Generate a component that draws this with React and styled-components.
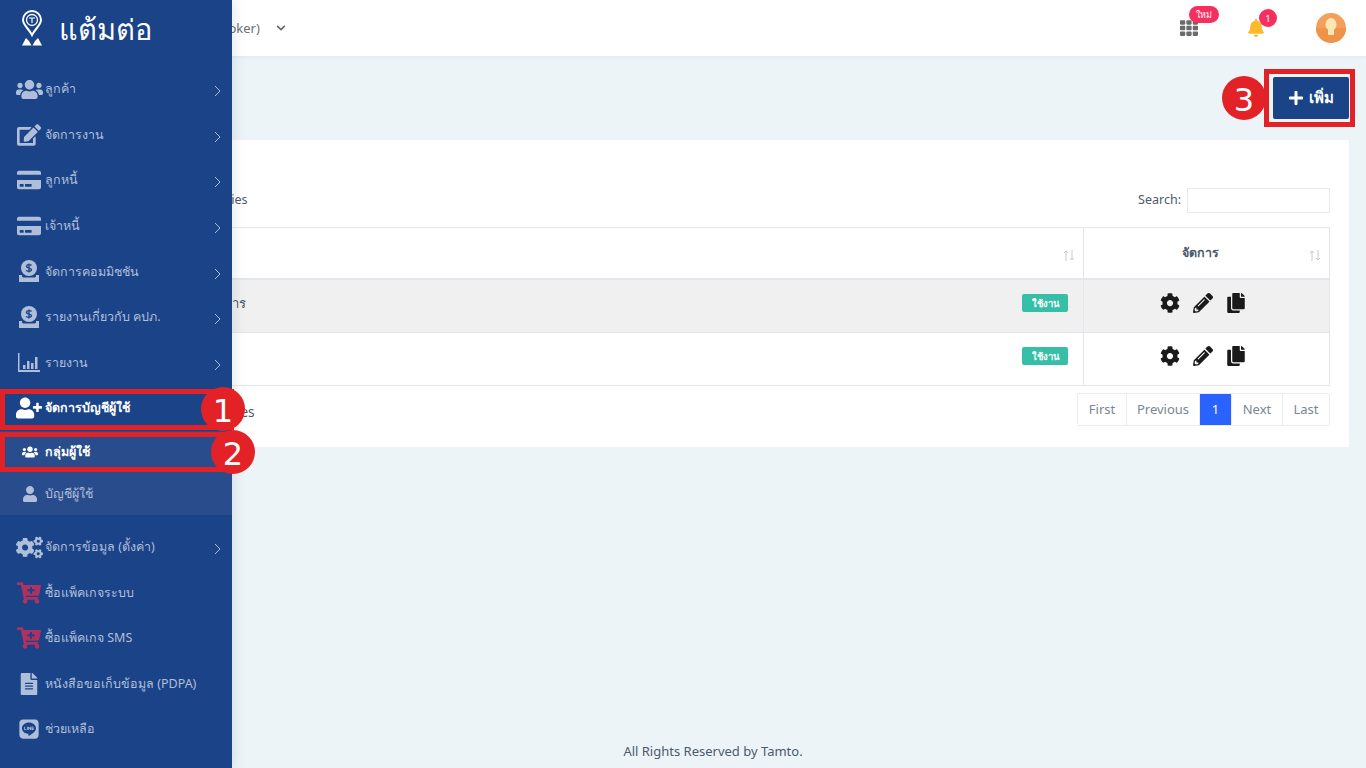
import React from 'react';
import styled, { createGlobalStyle } from 'styled-components';
import {
  FaUsers, FaEdit, FaCreditCard, FaUserPlus, FaUser, FaCogs, FaCartPlus, FaFileAlt, FaLine,
  FaCog, FaPencilAlt, FaCopy, FaBell, FaTh, FaPlus, FaChevronDown,
} from 'react-icons/fa';

const FONT = `"Noto Sans", "Open Sans", "DejaVu Sans", sans-serif`;
const NAVY = '#1a4388';
const RED = '#e32227';

const GlobalStyle = createGlobalStyle`
  html, body { margin: 0; padding: 0; height: 100%; overflow: hidden; }
  body { font-family: ${FONT}; background: #edf4f7; color: #4c5a6b; }
`;

const Page = styled.div`
  position: relative;
  width: 1366px;
  height: 768px;
  display: flex;
  flex-direction: column;
  overflow: hidden;
`;

/* sidebar */
const Sidebar = styled.aside`
  position: absolute;
  left: 0;
  top: 0;
  bottom: 0;
  width: 232px;
  background: ${NAVY};
  box-shadow: 2px 0 12px rgba(40, 60, 90, 0.12);
  z-index: 5;
  display: flex;
  flex-direction: column;
`;

const Logo = styled.div`
  height: 66.5px;
  display: flex;
  align-items: flex-start;
  padding: 10px 0 0 22px;
  gap: 17px;
  color: #fff;
  font-size: 29px;
  font-weight: 300;
  line-height: 38px;
  box-sizing: border-box;
`;

const Menu = styled.nav`
  display: flex;
  flex-direction: column;
`;

const Item = styled.div`
  height: 45.6px;
  display: flex;
  align-items: center;
  font-size: 12.5px;
  font-weight: ${(p) => (p.$active ? 700 : 400)};
  color: ${(p) => (p.$active ? '#fff' : '#b0bfd9')};
  position: relative;
`;

const IconBox = styled.span`
  width: 45px;
  flex: none;
  display: flex;
  justify-content: center;
  padding-left: 13px;
  box-sizing: border-box;
  color: ${(p) => p.$color || 'inherit'};
  font-size: ${(p) => p.$size || 24}px;
  svg { display: block; }
`;

const Arrow = styled.svg`
  position: absolute;
  right: 11px;
  top: 50%;
  margin-top: -4px;
  width: 7px;
  height: 12px;
  fill: none;
  stroke: #b0bfd9;
  stroke-width: 1;
`;

const Sub = styled.div`
  background: #294d8c;
  display: flex;
  flex-direction: column;
  margin-bottom: 9px;
`;

const SubItem = styled(Item)`
  height: 42px;
`;

const SubIcon = styled(IconBox)`
  padding-left: 14px;
  font-size: 16px;
`;

/* top bar */
const Topbar = styled.header`
  height: 56px;
  flex: none;
  background: #fff;
  box-shadow: 0 1px 4px rgba(60, 80, 110, 0.08);
  display: flex;
  align-items: center;
  padding-left: 211px;
  color: #6a6f76;
  font-size: 13px;
`;

const Caret = styled(FaChevronDown)`
  margin-left: 16px;
  font-size: 10px;
  color: #666;
`;

const TopRight = styled.div`
  margin-left: auto;
  display: flex;
  align-items: center;
  padding-right: 20px;
`;

const TopIcon = styled.div`
  position: relative;
  margin-right: ${(p) => p.$gap}px;
  color: ${(p) => p.$color};
  font-size: 18px;
  display: flex;
`;

const Pill = styled.span`
  position: absolute;
  left: 9px;
  top: -13px;
  width: 30px;
  height: 17px;
  border-radius: 9px;
  background: #f62f5e;
  color: #fff;
  font-size: 9px;
  display: flex;
  align-items: center;
  justify-content: center;
`;

const Dot = styled.span`
  position: absolute;
  left: 12px;
  top: -10px;
  width: 18px;
  height: 18px;
  border-radius: 50%;
  background: #f62f5e;
  color: #fff;
  font-size: 9.5px;
  display: flex;
  align-items: center;
  justify-content: center;
`;

/* content */
const Main = styled.main`
  flex: 1;
  display: flex;
  flex-direction: column;
  padding: 0 17px 0 66px;
  min-height: 0;
`;

const ActionRow = styled.div`
  height: 84px;
  display: flex;
  justify-content: flex-end;
  align-items: flex-start;
  padding-top: 21px;
  box-sizing: border-box;
`;

const AddButton = styled.button`
  width: 76px;
  height: 42px;
  background: ${NAVY};
  border: 0;
  border-radius: 2px;
  color: #fff;
  font: 700 15px ${FONT};
  display: flex;
  align-items: center;
  justify-content: center;
  gap: 5px;
  padding: 0;
`;

const Card = styled.section`
  background: #fff;
  padding: 48px 19px 21px;
  display: flex;
  flex-direction: column;
`;

const TopControls = styled.div`
  display: flex;
  justify-content: space-between;
  align-items: center;
  height: 25px;
  font-size: 12.5px;
  margin-bottom: 14px;
`;

const Length = styled.label`
  display: flex;
  align-items: center;
  gap: 6px;
  padding-bottom: 2px;
`;

const LengthBox = styled.span`
  width: 78px;
  height: 25px;
  box-sizing: border-box;
  border: 1px solid #e6eaee;
`;

const SearchLabel = styled.label`
  display: flex;
  align-items: center;
  gap: 6px;
  span { position: relative; top: -1px; }
`;

const SearchInput = styled.input`
  width: 143px;
  height: 25px;
  box-sizing: border-box;
  border: 1px solid #e6eaee;
  background: #fff;
  padding: 0 6px;
`;

const Table = styled.table`
  width: 100%;
  border-collapse: collapse;
  table-layout: fixed;
  border: 1px solid #e3e7ec;
  font-size: 13px;
`;

const Th = styled.th`
  position: relative;
  box-sizing: border-box;
  height: 51px;
  border: 1px solid #e3e7ec;
  border-bottom: 2px solid #e3e7ec;
  font-weight: 700;
  font-size: 12.5px;
  padding: 0 28px 0 16px;
  width: ${(p) => p.$w || 'auto'};
  text-align: ${(p) => p.$align || 'center'};
`;

const Td = styled.td`
  height: 53.5px;
  box-sizing: border-box;
  padding: 0 15px 5px 16px;
  border: 1px solid #e3e7ec;
  background: ${(p) => (p.$odd ? '#f0f0f0' : '#fff')};
`;

const NameCell = styled.div`
  display: flex;
  justify-content: space-between;
  align-items: center;
`;

const Status = styled.span`
  width: 46px;
  height: 18px;
  border-radius: 2px;
  background: #36bea6;
  color: #fff;
  font-size: 9.5px;
  font-weight: 600;
  display: flex;
  align-items: center;
  justify-content: center;
`;

const Actions = styled.div`
  display: flex;
  justify-content: center;
  align-items: center;
  gap: 13px;
  color: #1a1a1a;
  font-size: 20px;
  padding-right: 9px;
`;

const Sort = styled.svg`
  position: absolute;
  right: 8px;
  top: 22px;
  width: 12px;
  height: 11px;
  fill: none;
  stroke: #c3cad3;
  stroke-width: 1;
`;

const BottomControls = styled.div`
  display: flex;
  justify-content: space-between;
  align-items: center;
  margin-top: 7px;
  font-size: 13.6px;
`;

const Info = styled.span`
  padding-top: 4px;
`;

const Pager = styled.div`
  display: flex;
  height: 33px;
  box-sizing: border-box;
  border: 1px solid #e8ecf0;
  border-radius: 2px;
`;

const PageBtn = styled.span`
  width: ${(p) => p.$w}px;
  box-sizing: border-box;
  display: flex;
  align-items: center;
  justify-content: center;
  padding-bottom: 2px;
  font-size: 13px;
  color: ${(p) => (p.$on ? '#fff' : '#7a8694')};
  background: ${(p) => (p.$on ? '#2962ff' : '#fff')};
  border-left: ${(p) => (p.$first ? '0' : '1px solid #e8ecf0')};
`;

const Footer = styled.footer`
  position: absolute;
  left: 60px;
  right: 0;
  bottom: 8px;
  text-align: center;
  font-size: 13px;
  color: #4c5a6b;
`;

/* tutorial markers drawn on top of the screenshot */
const Mark = styled.div`
  position: absolute;
  box-sizing: border-box;
  border: 5px solid ${RED};
  left: ${(p) => p.$x}px;
  top: ${(p) => p.$y}px;
  width: ${(p) => p.$w}px;
  height: ${(p) => p.$h}px;
  z-index: 10;
`;

const Num = styled.div`
  position: absolute;
  box-sizing: border-box;
  left: ${(p) => p.$x - 22}px;
  top: ${(p) => p.$y - 22}px;
  width: 44px;
  height: 44px;
  padding-top: 3px;
  border-radius: 50%;
  background: ${RED};
  color: #fff;
  font: 400 32px/1 "DejaVu Sans", sans-serif;
  display: flex;
  align-items: center;
  justify-content: center;
  z-index: 11;
`;

const PinLogo = () => (
  <svg width="20" height="36" viewBox="0 0 20 36" fill="none" stroke="#fff">
    <path d="M10 25 C7 19 1 15 1 10 a9 9 0 0 1 18 0 C19 15 13 19 10 25Z" strokeWidth="2" />
    <circle cx="10" cy="10" r="5.500" strokeWidth="1.300" />
    <path d="M7 8h6M10 8v5" strokeWidth="1.200" />
    <path d="M0 35.500 L4 28 L7 31 L9.500 35.500Z M10.500 35.500 L13 31 L16 28 L20 35.500Z" fill="#fff" stroke="none" />
  </svg>
);

const Coin = () => (
  <svg width="22" height="23" viewBox="0 0 22 23" fill="currentColor">
    <circle cx="11" cy="8" r="8" />
    <path d="M11 3.500v9M13.500 5.500c-.5-1-4.800-1.400-5 .8c-.2 2.300 5.200 1.300 5 3.500c-.2 2.100-4.800 1.800-5.200.5" fill="none" stroke="#1a4388" strokeWidth="1.300" />
    <path d="M1 15v7h20v-7h-3v1.500l-1 1h-12l-1-1v-1.500z" />
  </svg>
);

const Bars = () => (
  <svg width="22" height="19" viewBox="0 0 22 19" fill="currentColor">
    <path d="M0 0h1.500v17H22v2H0z" />
    <path d="M5 12h2.500v4H5zM9 8h2.500v8H9zM13 10h2.500v6H13zM17 4h2.500v12H17z" />
  </svg>
);

const Avatar = () => (
  <svg width="30" height="30" viewBox="0 0 30 30">
    <circle cx="15" cy="15" r="15" fill="#f59f5c" />
    <path d="M0 15a15 15 0 0 0 30 0z" fill="#ee9347" />
    <ellipse cx="15" cy="11.500" rx="5.500" ry="6.500" fill="#fbe6b5" />
    <rect x="12" y="17" width="6" height="5" fill="#fbe6b5" />
  </svg>
);

const CART = '#ad3262';

const items = [
  { label: 'ลูกค้า', icon: <FaUsers />, size: 27, more: true },
  { label: 'จัดการงาน', icon: <FaEdit />, size: 24, more: true },
  { label: 'ลูกหนี้', icon: <FaCreditCard />, size: 24, more: true },
  { label: 'เจ้าหนี้', icon: <FaCreditCard />, size: 24, more: true },
  { label: 'จัดการคอมมิชชัน', icon: <Coin />, more: true },
  { label: 'รายงานเกี่ยวกับ คปภ.', icon: <Coin />, more: true },
  { label: 'รายงาน', icon: <Bars />, more: true },
];

const itemsAfter = [
  { label: 'จัดการข้อมูล (ตั้งค่า)', icon: <FaCogs />, size: 27, more: true },
  { label: 'ซื้อแพ็คเกจระบบ', icon: <FaCartPlus />, size: 24, color: CART },
  { label: 'ซื้อแพ็คเกจ SMS', icon: <FaCartPlus />, size: 24, color: CART },
  { label: 'หนังสือขอเก็บข้อมูล (PDPA)', icon: <FaFileAlt />, size: 22 },
  { label: 'ช่วยเหลือ', icon: <FaLine />, size: 22 },
];

const MenuRow = ({ label, icon, size, color, more }) => (
  <Item>
    <IconBox $size={size} $color={color}>{icon}</IconBox>
    {label}
    {more && (
      <Arrow viewBox="0 0 7 12"><path d="M1 1l5 5-5 5" /></Arrow>
    )}
  </Item>
);

const SortIcon = () => (
  <Sort viewBox="0 0 12 11"><path d="M3 11V1M1 3l2-2 2 2M9 0v10M7 8l2 2 2-2" /></Sort>
);

export default function App() {
  return (
    <Page>
      <GlobalStyle />
      <Sidebar>
        <Logo><PinLogo />แต้มต่อ</Logo>
        <Menu>
          {items.map((it) => <MenuRow key={it.label} {...it} />)}
          <Item $active>
            <IconBox $size={26}><FaUserPlus /></IconBox>
            จัดการบัญชีผู้ใช้
          </Item>
          <Sub>
            <SubItem $active>
              <SubIcon><FaUsers /></SubIcon>
              กลุ่มผู้ใช้
            </SubItem>
            <SubItem>
              <SubIcon $size={14}><FaUser /></SubIcon>
              บัญชีผู้ใช้
            </SubItem>
          </Sub>
          {itemsAfter.map((it) => <MenuRow key={it.label} {...it} />)}
        </Menu>
      </Sidebar>

      <Topbar>
        <span>(Broker)</span>
        <Caret />
        <TopRight>
          <TopIcon $gap={49} $color="#6b6b6b"><FaTh /><Pill>ใหม่</Pill></TopIcon>
          <TopIcon $gap={51} $color="#fcb92c"><FaBell /><Dot>1</Dot></TopIcon>
          <Avatar />
        </TopRight>
      </Topbar>

      <Main>
        <ActionRow>
          <AddButton><FaPlus size={16} />เพิ่ม</AddButton>
        </ActionRow>
        <Card>
          <TopControls>
            <Length>Show<LengthBox />entries</Length>
            <SearchLabel><span>Search:</span><SearchInput /></SearchLabel>
          </TopControls>
          <Table>
            <thead>
              <tr>
                <Th $align="left">ชื่อกลุ่ม<SortIcon /></Th>
                <Th $w="246px">จัดการ<SortIcon /></Th>
              </tr>
            </thead>
            <tbody>
              {['กลุ่มผู้ดูแลทีมและผู้จัดการ', 'พนักงาน'].map((name, i) => (
                <tr key={name}>
                  <Td $odd={i === 0}>
                    <NameCell>{name}<Status>ใช้งาน</Status></NameCell>
                  </Td>
                  <Td $odd={i === 0}>
                    <Actions><FaCog /><FaPencilAlt /><FaCopy /></Actions>
                  </Td>
                </tr>
              ))}
            </tbody>
          </Table>
          <BottomControls>
            <Info>Showing 1 to 2 of 2 entries</Info>
            <Pager>
              <PageBtn $first $w={48}>First</PageBtn>
              <PageBtn $w={73}>Previous</PageBtn>
              <PageBtn $on $w={32}>1</PageBtn>
              <PageBtn $w={51}>Next</PageBtn>
              <PageBtn $w={47}>Last</PageBtn>
            </Pager>
          </BottomControls>
        </Card>
      </Main>

      <Footer>All Rights Reserved by Tamto.</Footer>

      <Mark $x={0} $y={389} $w={234} $h={41} />
      <Num $x={223} $y={409}>1</Num>
      <Mark $x={0} $y={432} $w={234} $h={40} />
      <Num $x={233} $y={452}>2</Num>
      <Mark $x={1264} $y={69} $w={91} $h={58} />
      <Num $x={1244} $y={98}>3</Num>
    </Page>
  );
}
